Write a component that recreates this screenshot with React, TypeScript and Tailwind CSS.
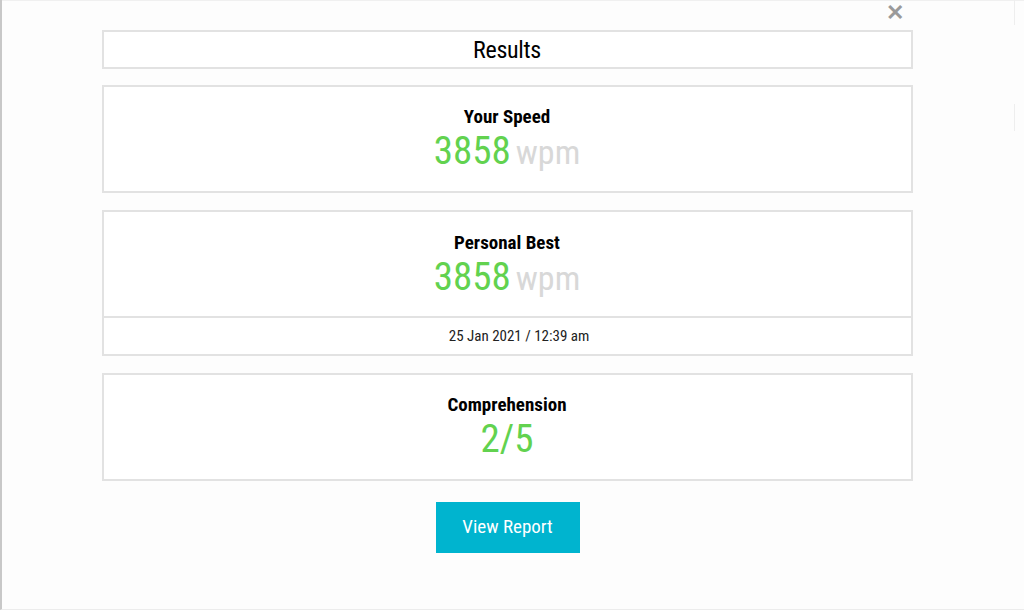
const font = { fontFamily: "Roboto, 'Liberation Sans', sans-serif", fontStretch: "condensed" };

function Stat({ label, value, unit }: { label: string; value: string; unit?: string }) {
  return (
    <div className="flex flex-col items-center">
      <p className="pt-[2px] text-[19px] font-bold leading-6 text-black">{label}</p>
      <p className="mt-[2px] text-[39px] leading-[40px]">
        <span className="text-[#62d24f]">{value}</span>
        {unit && <span className="ml-[5px] text-[34px] text-[#d8d8d8]">{unit}</span>}
      </p>
    </div>
  );
}

export default function App() {
  return (
    <div style={font} className="relative h-[610px] w-[1024px] overflow-hidden border-l-2 border-b border-[#c8c8c8] border-b-[#ececec] bg-[#fdfdfd]">
      <div className="absolute left-0 right-0 top-0 h-px bg-[#f0f0f0]" />
      <button className="absolute right-[120px] top-[2px] text-[22px] font-bold leading-[22px] text-[#9a9a9a]">
        ✕
      </button>
      <div className="absolute right-[9px] top-0 h-[25px] w-px bg-[#eeeeee]" />
      <div className="absolute right-[9px] top-[104px] h-[27px] w-px bg-[#eeeeee]" />

      <div className="mx-auto flex w-[811px] -translate-x-[6px] flex-col pt-[30px]">
        <div className="flex h-[39px] items-center justify-center border-2 border-[#e2e2e2] bg-white">
          <h1 className="text-[24px] leading-none tracking-[-0.3px] text-black">Results</h1>
        </div>

        <div className="mt-[16px] flex h-[108px] items-center justify-center border-2 border-[#e2e2e2] bg-white pb-[4px]">
          <Stat label="Your Speed" value="3858" unit="wpm" />
        </div>

        <div className="mt-[17px] flex flex-col border-2 border-[#e2e2e2] bg-white">
          <div className="flex h-[104px] items-center justify-center pb-[2px]">
            <Stat label="Personal Best" value="3858" unit="wpm" />
          </div>
          <div className="flex h-[38px] items-center justify-center border-t-2 border-[#e2e2e2] pl-[24px] text-[15px] text-[#222]">
            25 Jan 2021 / 12:39 am
          </div>
        </div>

        <div className="mt-[17px] flex h-[108px] items-center justify-center border-2 border-[#e2e2e2] bg-white pb-[4px]">
          <Stat label="Comprehension" value="2/5" />
        </div>

        <div className="mt-[21px] flex justify-center">
          <button className="ml-px h-[51px] w-[144px] bg-[#00b4cf] text-[19px] text-white">
            View Report
          </button>
        </div>
      </div>
    </div>
  );
}
